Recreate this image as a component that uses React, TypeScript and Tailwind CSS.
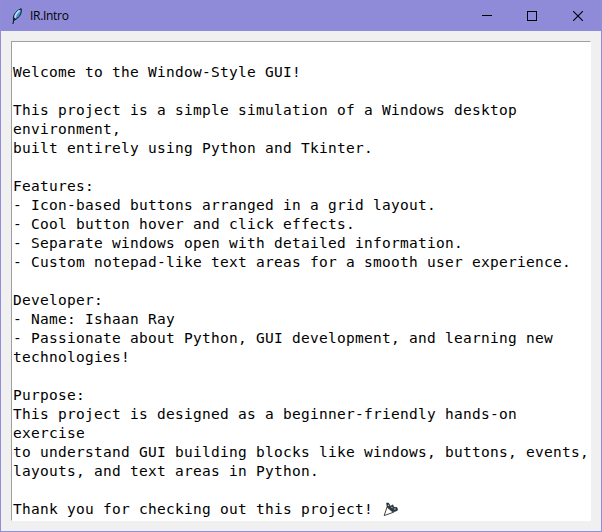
const lines: string[] = [
  '',
  'Welcome to the Window-Style GUI!',
  '',
  'This project is a simple simulation of a Windows desktop',
  'environment,',
  'built entirely using Python and Tkinter.',
  '',
  'Features:',
  '- Icon-based buttons arranged in a grid layout.',
  '- Cool button hover and click effects.',
  '- Separate windows open with detailed information.',
  '- Custom notepad-like text areas for a smooth user experience.',
  '',
  'Developer:',
  '- Name: Ishaan Ray',
  '- Passionate about Python, GUI development, and learning new',
  'technologies!',
  '',
  'Purpose:',
  'This project is designed as a beginner-friendly hands-on',
  'exercise',
  'to understand GUI building blocks like windows, buttons, events,',
  'layouts, and text areas in Python.',
  '',
];

function FeatherIcon() {
  return (
    <svg className="h-4 w-4 shrink-0" viewBox="0 0 16 16" aria-hidden="true">
      <path d="M4.6 12.2C3.6 8.2 6 3.2 12.2.7c.8 4-1.4 9.2-7.2 11.5Z" fill="#4793d0" stroke="#10161d" strokeWidth="1" />
      <path d="M6 9.8C6.2 7 8 4.2 10.6 2.4" fill="none" stroke="#b4e2ff" strokeWidth="1.8" />
      <path d="M3.9 15.8C4.2 13.6 4.8 11.6 5.8 10" fill="none" stroke="#111820" strokeWidth="1.2" />
    </svg>
  );
}

function PartyPopper() {
  return (
    <svg className="ml-px h-[15px] w-4" viewBox="0 0 16 15" aria-hidden="true">
      <path d="M4.2 4.6 1.2 13.6l9.4-3.4Z" fill="#fff" stroke="#4a4038" strokeWidth="1" />
      <path d="m4.4 5 6 5.4" fill="none" stroke="#3c4650" strokeWidth="1.2" />
      <path d="m3.7 1.1 2 .2 1.5 3.2 2.7-1.6.5 2.4 3.6.4.4 2.5-2.8 1.3-2.2-.7-1.5-1.9-2.2-2-1.5-.2Z" fill="#2c3e48" stroke="#1c2024" strokeWidth=".8" />
      <path d="m4.9 3 1 .8M11.2 7l1.5-.1" stroke="#82c8e6" strokeWidth="1.3" />
      <path d="m8.2 4.9 1.4 1" stroke="#d58a4b" strokeWidth="1.2" />
    </svg>
  );
}

export default function App() {
  return (
    <div className="flex h-[532px] w-[602px] flex-col overflow-hidden border border-t-0 border-[#918dda] bg-[#f0f0f0] text-black">
      <header className="flex h-[31px] shrink-0 items-center bg-[#8f8bd8] pl-[8px]">
        <FeatherIcon />
        <h1 className="ml-[5px] font-['Open_Sans','Noto_Sans',sans-serif] text-[12px] leading-4 tracking-[-0.3px]">IR.Intro</h1>
        <div className="ml-auto flex h-full">
          <button aria-label="Minimize" className="flex w-[45px] items-center justify-center">
            <svg className="h-[10px] w-[10px]" viewBox="0 0 10 10" shapeRendering="crispEdges"><path d="M0 4.5h10" stroke="#000" /></svg>
          </button>
          <button aria-label="Maximize" className="flex w-[45px] items-center justify-center">
            <svg className="h-[10px] w-[10px]" viewBox="0 0 10 10" shapeRendering="crispEdges"><path d="M.5.5h9v9h-9z" fill="none" stroke="#000" /></svg>
          </button>
          <button aria-label="Close" className="flex w-[47px] items-center justify-center">
            <svg className="h-[10px] w-[10px]" viewBox="0 0 10 10"><path d="m0 0 10 10M10 0 0 10" stroke="#000" strokeWidth="1.1" /></svg>
          </button>
        </div>
      </header>
      <main className="flex-1 p-[10px]">
        <div className="h-[480px] w-[580px] overflow-hidden border border-t-[#a0a0a0] border-r-white border-b-white border-l-[#a0a0a0] bg-white pt-[2px] pl-px font-['DejaVu_Sans_Mono',monospace] text-[14.5px] leading-[19px] tracking-[0.27px] whitespace-pre">
          {lines.map((line, index) => (
            <p key={index} className="h-[19px]">{line}</p>
          ))}
          <p className="flex h-[19px] items-center">Thank you for checking out this project! <PartyPopper /></p>
        </div>
      </main>
    </div>
  );
}
